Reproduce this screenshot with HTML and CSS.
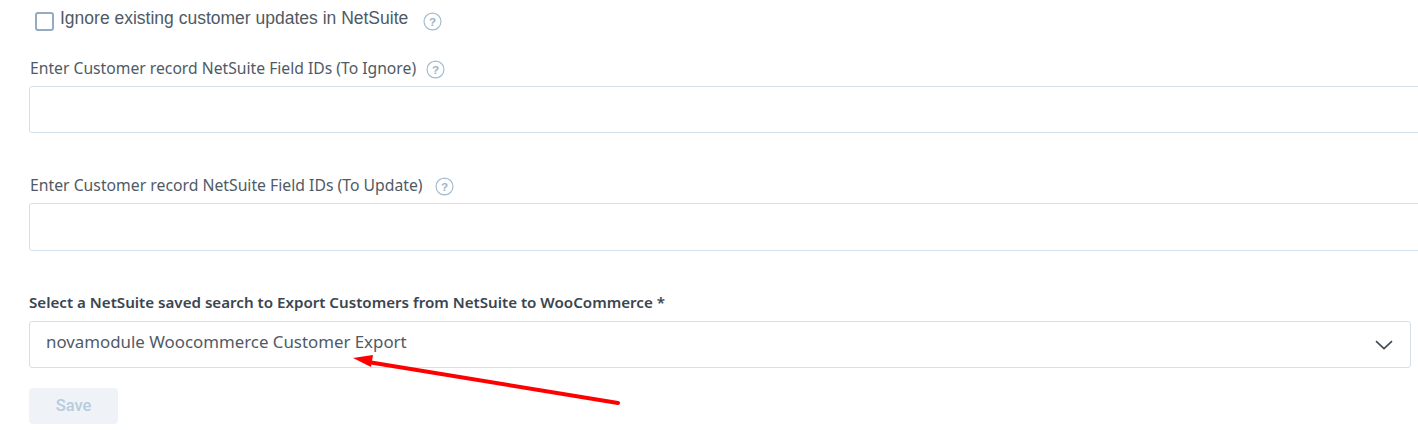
FILE: index.html
```html
<!DOCTYPE html>
<html lang="en">
<head>
<meta charset="utf-8">
<title>Customer settings</title>
<link rel="stylesheet" href="styles.css">
</head>
<body>
<main class="form">
  <div class="check-row">
    <span class="checkbox"></span>
    <span class="check-label">Ignore existing customer updates in NetSuite</span>
    <svg class="help help-check" viewBox="0 0 18 18"><circle cx="9" cy="9" r="8" /><text x="9" y="13" text-anchor="middle">?</text></svg>
  </div>
  <div class="field field-first">
    <div class="label-row">
      <label class="label">Enter Customer record NetSuite Field IDs (To Ignore)</label>
      <svg class="help" viewBox="0 0 18 18"><circle cx="9" cy="9" r="8" /><text x="9" y="13" text-anchor="middle">?</text></svg>
    </div>
    <div class="input input-wide"></div>
  </div>
  <div class="field field-second">
    <div class="label-row">
      <label class="label label-update">Enter Customer record NetSuite Field IDs (To Update)</label>
      <svg class="help help-update" viewBox="0 0 18 18"><circle cx="9" cy="9" r="8" /><text x="9" y="13" text-anchor="middle">?</text></svg>
    </div>
    <div class="input input-wide input-tall"></div>
  </div>
  <div class="field field-third">
    <div class="label-row label-row-strong">
      <label class="label label-strong">Select a NetSuite saved search to Export Customers from NetSuite to WooCommerce *</label>
    </div>
    <div class="input select">
      <span class="select-value">novamodule Woocommerce Customer Export</span>
      <svg class="chevron" viewBox="0 0 18 10"><path d="M1 1.2 9 8.6 17 1.2"/></svg>
    </div>
  </div>
  <button class="save" type="button">Save</button>
</main>
<svg class="arrow" viewBox="0 0 1418 430"><path class="arrow-line" d="M618 403 368 362"/><path class="arrow-head" d="M353 358 373 355 371 367Z"/></svg>
</body>
</html>
```

FILE: styles.css
```css
* { box-sizing: border-box; }
html, body { margin: 0; height: 430px; overflow: hidden; background: #fff; }
body { position: relative; font-family: "Noto Sans", "Open Sans", sans-serif; color: #3f4a56; }
.form { padding: 9px 0 0 29px; width: 1418px; }
.check-row { display: flex; align-items: center; height: 24px; padding-left: 6px; }
.checkbox { width: 19px; height: 19px; border: 2px solid #94abc0; border-radius: 3px; background: #fff; margin-top: 1px; }
.check-label { font-family: "Liberation Sans", Arial, sans-serif; font-size: 17.5px; margin-left: 6px; color: #4f5a65; position: relative; top: -3px; }
.help { width: 19px; height: 19px; flex: none; margin-left: 10px; position: relative; top: 1px; }
.help-check { margin-left: 15px; top: 0; }
.help-update { margin-left: 12px; }
.help circle { fill: none; stroke: #a3bbcf; stroke-width: 1.1; }
.help text { font-family: "Liberation Sans", sans-serif; font-size: 11px; font-weight: 700; fill: #9db3c6; }
.field-first { margin-top: 23px; }
.field-second { margin-top: 40px; }
.field-third { margin-top: 39px; }
.label-row { display: flex; align-items: center; height: 24px; margin-bottom: 6px; }
.label-row-strong { margin-bottom: 7px; }
.label { font-size: 15.7px; padding-left: 1px; color: #4f5a65; }
.label-update { font-size: 15.75px; }
.label-strong { font-weight: 600; font-size: 15.15px; padding-left: 0; color: #3a4550; }
.input { height: 47px; border: 1px solid #d5e1ea; border-radius: 3px; background: #fff; }
.input-wide { width: 1420px; }
.input-tall { height: 48px; }
.select { width: 1382px; display: flex; align-items: center; justify-content: space-between; padding: 0 17px 0 16px; font-size: 16.85px; color: #4f5a65; }
.select-value { position: relative; top: -3px; }
.chevron { width: 18px; height: 10px; }
.chevron path { fill: none; stroke: #3f4a56; stroke-width: 1.6; }
.save { display: block; margin-top: 20px; width: 89px; height: 36px; border: 0; border-radius: 4px; background: #eff3f8; color: #b8cbdd; font-family: Roboto, sans-serif; font-size: 16.5px; font-weight: 500; padding: 0 0 2px; }
.arrow { position: absolute; left: 0; top: 0; width: 1418px; height: 430px; pointer-events: none; }
.arrow-line { stroke: #fe0000; stroke-width: 4; fill: none; stroke-linecap: round; }
.arrow-head { fill: #fe0000; }
```
